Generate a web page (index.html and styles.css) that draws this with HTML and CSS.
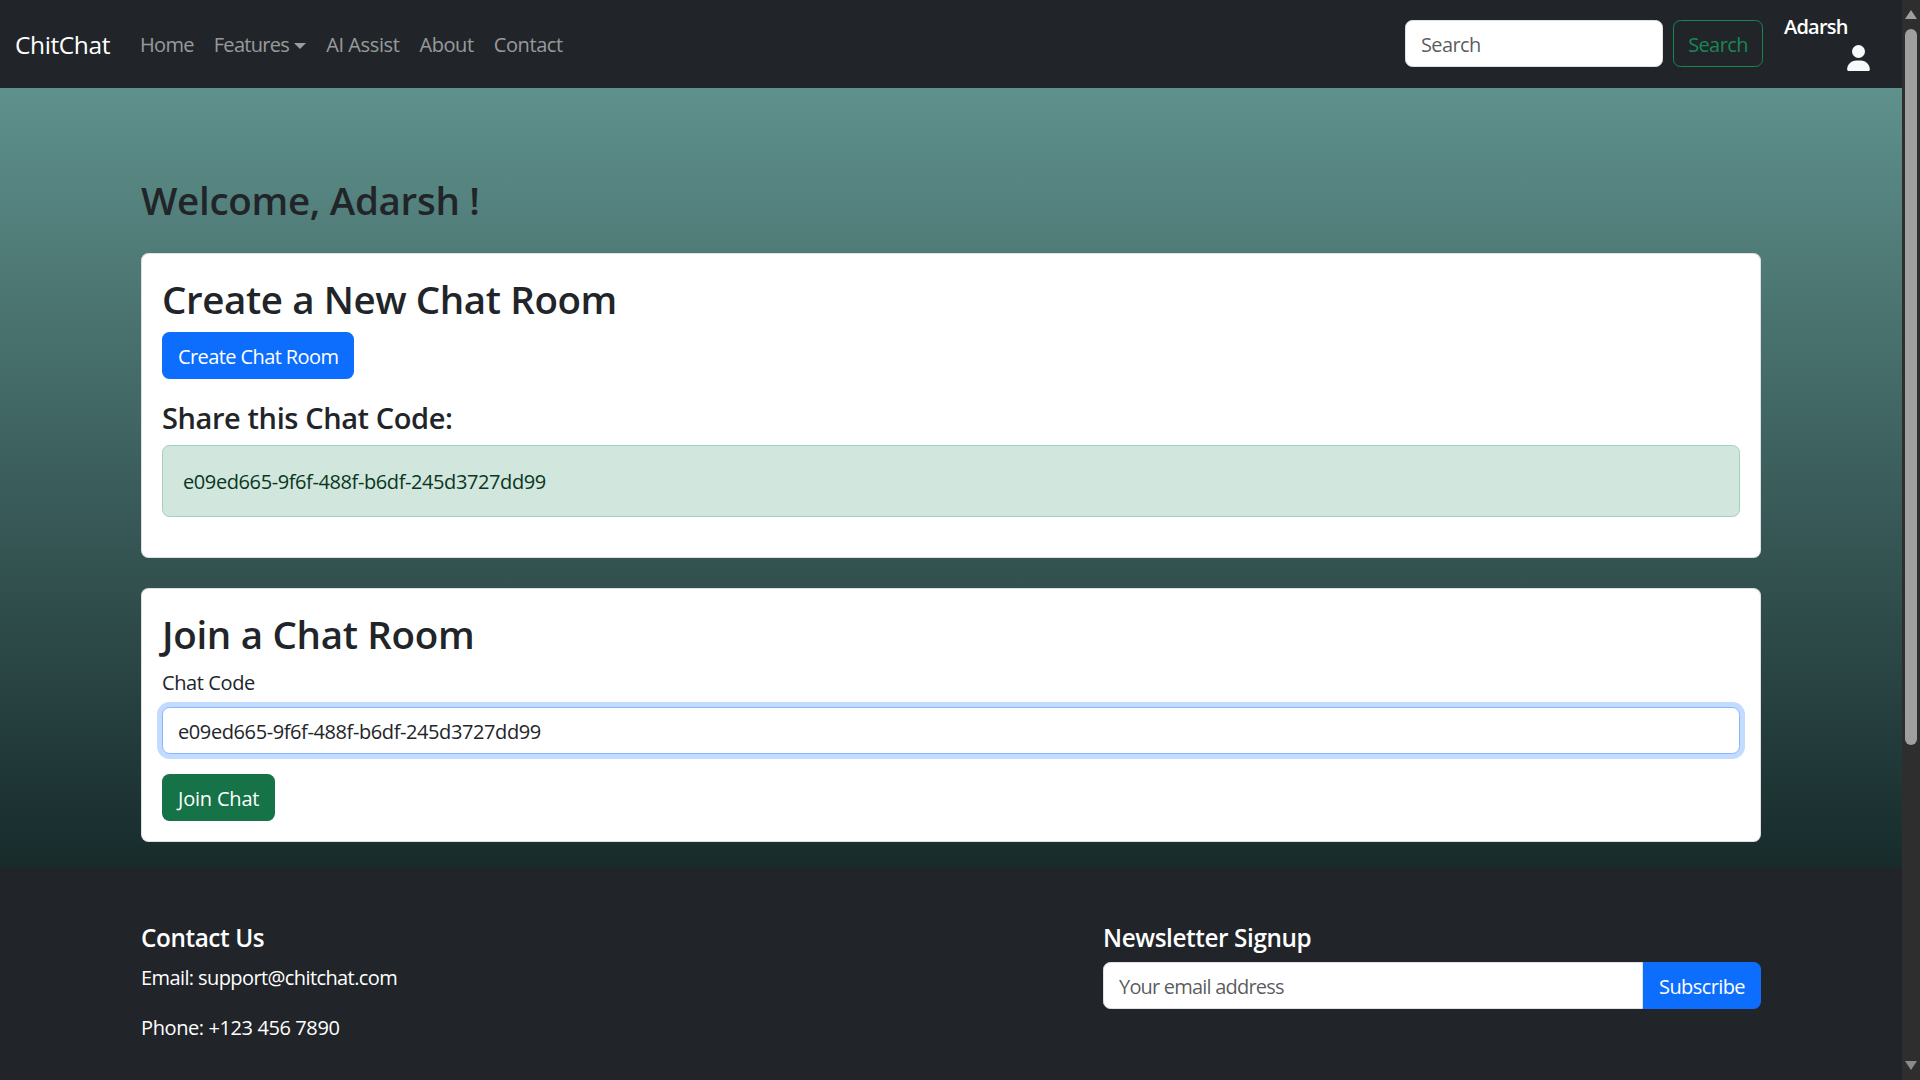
FILE: index.html
```html
<!DOCTYPE html>
<html lang="en">
<head>
<meta charset="utf-8">
<title>ChitChat</title>
<link rel="stylesheet" href="styles.css">
</head>
<body>
<div class="page">
  <nav class="navbar">
    <a class="brand">ChitChat</a>
    <ul class="nav-links">
      <li class="nav-link nav-tight">Home</li>
      <li class="nav-link nav-tight">Features<span class="caret"></span></li>
      <li class="nav-link">AI Assist</li>
      <li class="nav-link">About</li>
      <li class="nav-link">Contact</li>
    </ul>
    <form class="search">
      <input class="control search-input" type="text" placeholder="Search">
      <button class="btn btn-outline" type="button">Search</button>
    </form>
    <div class="user">
      <span class="user-name">Adarsh</span>
      <svg class="user-icon" viewBox="0 0 448 512"><path d="M224 256A128 128 0 1 0 224 0a128 128 0 1 0 0 256zm-45.7 48C79.8 304 0 383.8 0 482.3C0 498.7 13.3 512 29.7 512H418.3c16.4 0 29.7-13.3 29.7-29.7C448 383.8 368.2 304 269.7 304H178.3z"/></svg>
    </div>
  </nav>
  <main class="main">
    <div class="container">
      <h2 class="welcome">Welcome, Adarsh !</h2>
      <section class="card">
        <h2 class="card-title">Create a New Chat Room</h2>
        <button class="btn btn-primary" type="button">Create Chat Room</button>
        <h4 class="share-title">Share this Chat Code:</h4>
        <div class="alert">e09ed665-9f6f-488f-b6df-245d3727dd99</div>
      </section>
      <section class="card">
        <h2 class="card-title join-title">Join a Chat Room</h2>
        <label class="label" for="code">Chat Code</label>
        <input class="control focused" id="code" type="text" value="e09ed665-9f6f-488f-b6df-245d3727dd99">
        <button class="btn btn-success" type="button">Join Chat</button>
      </section>
    </div>
  </main>
  <footer class="footer">
    <div class="footer-grid">
      <div class="footer-col">
        <h5 class="footer-title">Contact Us</h5>
        <p class="footer-text footer-email">Email: support@chitchat.com</p>
        <p class="footer-text">Phone: +123 456 7890</p>
      </div>
      <div class="footer-col">
        <h5 class="footer-title">Newsletter Signup</h5>
        <div class="input-group">
          <input class="control group-input" type="email" placeholder="Your email address">
          <button class="btn btn-primary group-btn" type="button">Subscribe</button>
        </div>
      </div>
    </div>
  </footer>
</div>
<aside class="scrollbar">
  <span class="arrow arrow-up"></span>
  <span class="thumb"></span>
  <span class="arrow arrow-down"></span>
</aside>
</body>
</html>
```

FILE: styles.css
```css
* { box-sizing: border-box; }
html, body { height: 100%; }
body {
  margin: 0;
  display: flex;
  height: 100vh;
  overflow: hidden;
  font-family: "Open Sans", "Noto Sans", sans-serif;
  font-size: 20px;
  line-height: 30px;
  letter-spacing: -0.02em;
  color: #212529;
  background: #212529;
}
.page { flex: 1; min-width: 0; height: 100%; overflow: hidden; }

.control {
  display: block;
  width: 100%;
  height: 47px;
  padding: 8px 15px 6px;
  border: 1px solid #dee2e6;
  border-radius: 7.5px;
  background: #fff;
  color: #212529;
  font: inherit;
  letter-spacing: inherit;
  outline: none;
}
.control::placeholder { color: rgba(33,37,41,.75); opacity: 1; letter-spacing: -0.03em; }
.focused { border-color: #86b7fe; box-shadow: 0 0 0 5px rgba(13,110,253,.25); }

.btn {
  display: inline-block;
  height: 47px;
  padding: 8px 15px 6px;
  border: 1px solid transparent;
  border-radius: 7.5px;
  font: inherit;
  letter-spacing: inherit;
  white-space: nowrap;
}
.btn-outline { width: 90px; padding: 8px 0 6px; background: transparent; border-color: #198754; color: #198754; letter-spacing: -0.03em; }
.btn-primary { background: #0d6efd; color: #fff; letter-spacing: -0.03em; }
.btn-success { background: #157347; color: #fff; letter-spacing: -0.01em; }

.navbar {
  height: 88px;
  display: flex;
  align-items: center;
  padding: 0 32px 0 15px;
  background: #212529;
}
.brand { width: 95px; margin-right: 20px; font-size: 24.5px; color: #fff; white-space: nowrap; position: relative; top: 1px; }
.nav-links { display: flex; list-style: none; margin: 0; padding: 0; flex: 1; }
.nav-link { padding: 0 10px; color: rgba(255,255,255,.55); white-space: nowrap; position: relative; top: 1px; }
.nav-tight { letter-spacing: -0.035em; }
.caret {
  display: inline-block;
  margin-left: 5px;
  vertical-align: 3px;
  border-top: 6px solid;
  border-left: 6px solid transparent;
  border-right: 6px solid transparent;
}
.search { display: flex; gap: 10px; margin: 0 0 1px; }
.search-input { width: 258px; }
.user { align-self: flex-start; margin-top: 12px; margin-left: 21px; width: 86px; display: flex; flex-direction: column; align-items: flex-end; }
.user-name { align-self: flex-start; color: #fff; font-weight: 600; line-height: 30px; letter-spacing: -0.04em; }
.user-icon { width: 23px; height: 26px; margin-top: 3px; fill: #f8f9fa; }

.main { height: 779px; background: linear-gradient(to bottom, #5f918c 0%, #172b2b 100%); }
.container { width: 1650px; margin: 0 auto; padding: 88px 15px 0; }
.welcome { margin: 0 0 29px; font-size: 38.5px; line-height: 48px; font-weight: 600; letter-spacing: -0.0075em; }
.card {
  margin-bottom: 30px;
  padding: 20px;
  background: #fff;
  border: 1px solid rgba(0,0,0,.125);
  border-radius: 7.5px;
}
.card-title { margin: 0 0 9px; padding-top: 1px; font-size: 38.5px; line-height: 48px; font-weight: 600; }
.join-title { letter-spacing: -0.008em; }
.share-title { margin: 21px 0 9px; font-size: 29px; line-height: 36px; font-weight: 600; }
.alert {
  margin-bottom: 20px;
  padding: 21px 20px 19px;
  border: 1px solid #a3cfbb;
  border-radius: 7.5px;
  background: #d1e7dd;
  color: #0a3622;
}
.label { display: block; margin-bottom: 9px; padding-top: 1px; }
.card .focused { margin-bottom: 20px; }
.card .btn { display: block; }

.footer { padding: 56px 0 60px; background: #212529; color: #fff; }
.footer-grid { width: 1650px; margin: 0 auto; display: grid; grid-template-columns: 962px 1fr; }
.footer-col { padding: 0 15px; }
.footer-title { margin: 0 0 10px; font-size: 24.3px; line-height: 30px; font-weight: 600; }
.footer-text { margin: 0 0 20px; }
.footer-email { letter-spacing: -0.03em; }
.input-group { display: flex; margin-top: -1px; }
.group-input { flex: 1; min-width: 0; border-radius: 7.5px 0 0 7.5px; }
.group-input::placeholder { letter-spacing: -0.04em; }
.group-btn { width: 118px; padding: 2px 0 0; border-radius: 0 7.5px 7.5px 0; }

.scrollbar {
  width: 18px;
  height: 100%;
  flex: none;
  display: flex;
  flex-direction: column;
  align-items: center;
  background: #2e2e2e;
}
.arrow { width: 0; height: 0; border-left: 6.5px solid transparent; border-right: 6.5px solid transparent; }
.arrow-up { margin-top: 10px; border-bottom: 9px solid #9f9f9f; }
.arrow-down { margin-top: 316px; border-top: 9px solid #8a8a8a; }
.thumb { width: 12px; height: 716px; margin-top: 10px; border-radius: 6px; background: #9f9f9f; }
```
